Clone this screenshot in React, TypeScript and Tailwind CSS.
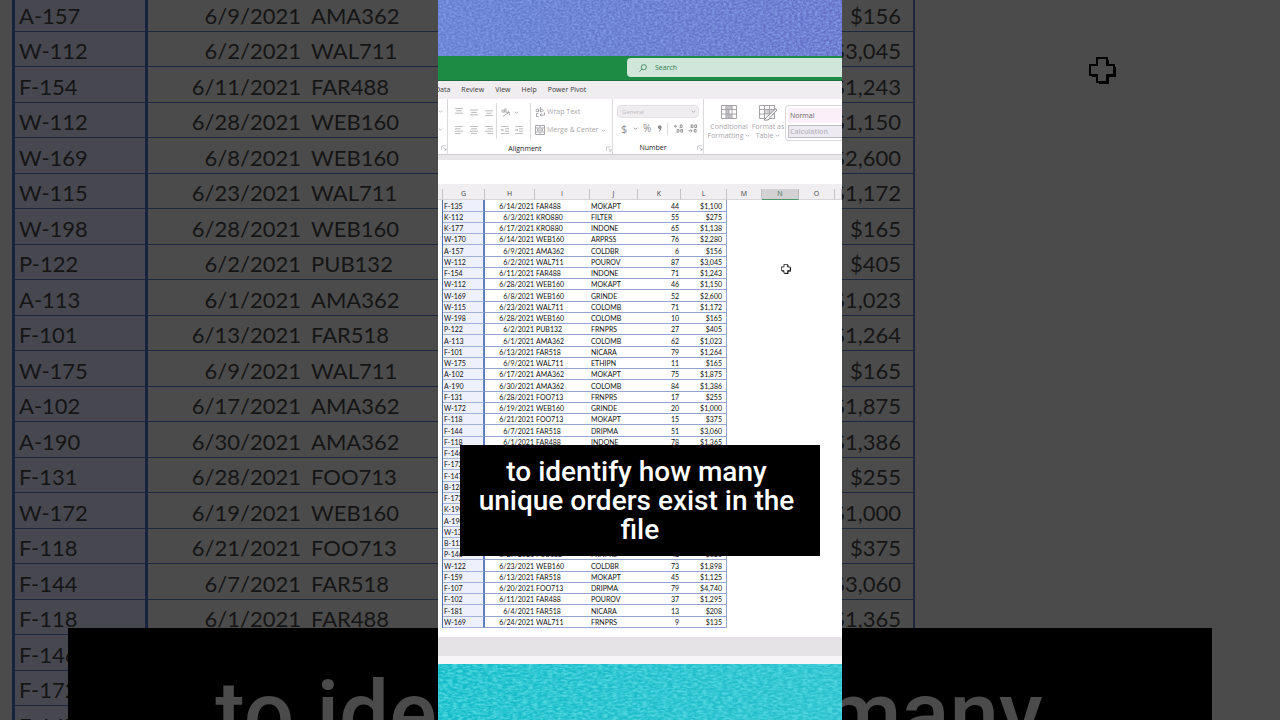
import type { ReactNode } from 'react'

type Order = [string, string, string, string, string, string]

const orders: Order[] = [
  ['F-135', '6/14/2021', 'FAR488', 'MOKAPT', '44', '$1,100'],
  ['K-112', '6/3/2021', 'KRO880', 'FILTER', '55', '$275'],
  ['K-177', '6/17/2021', 'KRO880', 'INDONE', '65', '$1,138'],
  ['W-170', '6/14/2021', 'WEB160', 'ARPRSS', '76', '$2,280'],
  ['A-157', '6/9/2021', 'AMA362', 'COLDBR', '6', '$156'],
  ['W-112', '6/2/2021', 'WAL711', 'POUROV', '87', '$3,045'],
  ['F-154', '6/11/2021', 'FAR488', 'INDONE', '71', '$1,243'],
  ['W-112', '6/28/2021', 'WEB160', 'MOKAPT', '46', '$1,150'],
  ['W-169', '6/8/2021', 'WEB160', 'GRINDE', '52', '$2,600'],
  ['W-115', '6/23/2021', 'WAL711', 'COLOMB', '71', '$1,172'],
  ['W-198', '6/28/2021', 'WEB160', 'COLOMB', '10', '$165'],
  ['P-122', '6/2/2021', 'PUB132', 'FRNPRS', '27', '$405'],
  ['A-113', '6/1/2021', 'AMA362', 'COLOMB', '62', '$1,023'],
  ['F-101', '6/13/2021', 'FAR518', 'NICARA', '79', '$1,264'],
  ['W-175', '6/9/2021', 'WAL711', 'ETHIPN', '11', '$165'],
  ['A-102', '6/17/2021', 'AMA362', 'MOKAPT', '75', '$1,875'],
  ['A-190', '6/30/2021', 'AMA362', 'COLOMB', '84', '$1,386'],
  ['F-131', '6/28/2021', 'FOO713', 'FRNPRS', '17', '$255'],
  ['W-172', '6/19/2021', 'WEB160', 'GRINDE', '20', '$1,000'],
  ['F-118', '6/21/2021', 'FOO713', 'MOKAPT', '15', '$375'],
  ['F-144', '6/7/2021', 'FAR518', 'DRIPMA', '51', '$3,060'],
  ['F-118', '6/1/2021', 'FAR488', 'INDONE', '78', '$1,365'],
  ['F-146', '', '', '', '', ''],
  ['F-172', '', '', '', '', ''],
  ['F-147', '', '', '', '', ''],
  ['B-128', '', '', '', '', ''],
  ['F-172', '', '', '', '', ''],
  ['K-190', '', '', '', '', ''],
  ['A-190', '', '', '', '', ''],
  ['W-136', '', '', '', '', ''],
  ['B-112', '', '', '', '', ''],
  ['P-146', '6/27/2021', 'PUB132', 'FRNPRS', '42', '$630'],
  ['W-122', '6/23/2021', 'WEB160', 'COLDBR', '73', '$1,898'],
  ['F-159', '6/13/2021', 'FAR518', 'MOKAPT', '45', '$1,125'],
  ['F-107', '6/20/2021', 'FOO713', 'DRIPMA', '79', '$4,740'],
  ['F-102', '6/11/2021', 'FAR488', 'POUROV', '37', '$1,295'],
  ['F-181', '6/4/2021', 'FAR518', 'NICARA', '13', '$208'],
  ['W-169', '6/24/2021', 'WAL711', 'FRNPRS', '9', '$135'],
]

const caption = 'to identify how many \nunique orders exist in the \nfile'

function CellCursor({ className, fill }: { className: string; fill: string }) {
  return (
    <svg viewBox="0 0 27 27" className={className} aria-hidden="true">
      <path d="M10 3h10v7h7v10h-7v7H10v-7H3V10h7z" fill="#000" />
      <path d="M8 1h10v7h7v10h-7v7H8v-7H1V8h7z" fill={fill} stroke="#000" strokeWidth="2" />
    </svg>
  )
}

function Fabric({ id, frequency, from, to, thread }: { id: string; frequency: string; from: string; to: string; thread: string }) {
  return (
    <svg className="block h-14 w-full shrink-0" aria-hidden="true">
      <linearGradient id={`${id}-base`}>
        <stop offset="0" stopColor={from} />
        <stop offset="1" stopColor={to} />
      </linearGradient>
      <filter id={id} x="0" y="0" width="100%" height="100%">
        <feTurbulence type="fractalNoise" baseFrequency={frequency} numOctaves="3" seed="4" />
        <feColorMatrix values="0 0 0 0 1  0 0 0 0 1  0 0 0 0 1  2.4 0 0 0 -0.8" />
        <feComposite in="SourceGraphic" operator="in" />
      </filter>
      <rect width="100%" height="100%" fill={`url(#${id}-base)`} />
      <rect width="100%" height="100%" fill={thread} filter={`url(#${id})`} />
    </svg>
  )
}

function Chevron() {
  return (
    <svg viewBox="0 0 6 6" className="size-[5px] shrink-0" fill="none" stroke="currentColor" aria-hidden="true">
      <path d="M1 2l2 2 2-2" />
    </svg>
  )
}

function Icon({ d, className = 'size-2' }: { d: string; className?: string }) {
  return (
    <svg viewBox="0 0 10 10" className={`shrink-0 ${className}`} fill="none" stroke="currentColor" aria-hidden="true">
      <path d={d} />
    </svg>
  )
}

function Tool({ label, children }: { label: string; children: ReactNode }) {
  return (
    <button type="button" aria-label={label} className="flex shrink-0 items-center">
      {children}
    </button>
  )
}

function Launcher() {
  return (
    <button type="button" aria-label="More settings" className="text-[#aaa8ac]">
      <Icon d="M1 8V1.5h7M4 4l4.500 4.500M8.500 5v3.500H5" className="size-[6px]" />
    </button>
  )
}

function Ribbon() {
  return (
    <div className="flex h-14 overflow-hidden border-b border-[#d0ced1] bg-white text-[#a9a7ab]">
      <div className="flex w-[10px] shrink-0 flex-col border-r border-[#dcdadd] pt-1">
        <div className="flex h-[18px] items-center"><Chevron /></div>
        <div className="flex h-[18px] items-center"><Chevron /></div>
        <div className="mt-1 flex h-3 items-center justify-end"><Launcher /></div>
      </div>

      <div className="flex w-[165px] shrink-0 flex-col border-r border-[#dcdadd] pt-1">
        <div className="flex">
          <div className="w-[49px] border-r border-[#dcdadd] pl-[7px]">
            <div className="flex h-[18px] items-center gap-[7px]">
              <Tool label="Top align"><Icon d="M0 .5h10M1.5 3.500h7M0 6.500h10" /></Tool>
              <Tool label="Middle align"><Icon d="M0 2.500h10M1.5 5.500h7M0 8.500h10" /></Tool>
              <Tool label="Bottom align"><Icon d="M0 3.500h10M1.5 6.500h7M0 9.500h10" /></Tool>
            </div>
            <div className="flex h-[18px] items-center gap-[7px]">
              <Tool label="Align left"><Icon d="M0 .5h10M0 3.500h7M0 6.500h10M0 9.500h7" /></Tool>
              <Tool label="Center"><Icon d="M0 .5h10M1.5 3.500h7M0 6.500h10M1.5 9.500h7" /></Tool>
              <Tool label="Align right"><Icon d="M0 .5h10M3 3.500h7M0 6.500h10M3 9.500h7" /></Tool>
            </div>
          </div>
          <div className="w-[34px] border-r border-[#dcdadd] pl-1">
            <div className="flex h-[18px] items-center gap-1">
              <Tool label="Orientation"><Icon d="M1 3.500a1.300 1.300 0 1 0 2.600 0a1.300 1.300 0 1 0-2.600 0M4 1v4M5.500 0v5M5.500 4a1.300 1.300 0 1 0 2.600-1M2 9.500L9 5M9.500 8V5H6.500" className="size-[9px]" /></Tool>
              <Chevron />
            </div>
            <div className="flex h-[18px] items-center gap-[6px]">
              <Tool label="Decrease indent"><Icon d="M0 .5h10M5 3.500h5M5 6.500h5M0 9.500h10M4 5H.5M2 3.500L.5 5L2 6.500" /></Tool>
              <Tool label="Increase indent"><Icon d="M0 .5h10M5 3.500h5M5 6.500h5M0 9.500h10M0 5h3.500M2 3.500L3.500 5L2 6.500" /></Tool>
            </div>
          </div>
          <div className="flex-1 pl-1 text-[7px]">
            <div className="flex h-[18px] items-center">
              <button type="button" className="flex items-center gap-[2px] whitespace-nowrap">
                <Icon d="M1 3.500a1.300 1.300 0 1 0 2.600 0a1.300 1.300 0 1 0-2.600 0M3.600 2v3M5.500 0v5M5.500 3.500a1.300 1.300 0 1 0 2.600 0a1.300 1.300 0 1 0-2.600 0M3.500 6.500H1.5v3h2M5 8h4.500V5.500M6.500 6.500L5 8l1.500 1.500" className="size-[10px]" />
                Wrap Text
              </button>
            </div>
            <div className="flex h-[18px] items-center justify-between pr-[6px]">
              <button type="button" className="flex items-center gap-[2px] whitespace-nowrap">
                <Icon d="M.5.5h9v9h-9zM.5 3h9M.5 7h9M5 .5V3M5 7v2.500M2 5h6M3.500 4L2 5l1.500 1M6.500 4L8 5L6.500 6" className="size-[10px]" />
                Merge &amp; Center
              </button>
              <Chevron />
            </div>
          </div>
        </div>
        <div className="mt-[5px] flex h-3 items-center">
          <span className="flex-1 pr-1 text-center text-[7px] text-[#222]">Alignment</span>
          <Launcher />
        </div>
      </div>

      <div className="flex w-[91px] shrink-0 flex-col border-r border-[#dcdadd] pt-1">
        <div className="flex h-[18px] items-center px-1">
          <div className="flex h-[13px] w-full items-center rounded-sm border border-[#e4e2e5] bg-[#efedf0] pr-[2px]">
            <select aria-label="Number format" className="flex-1 appearance-none pl-1 text-[6px] leading-[10px] text-[#bebcc0] outline-none">
              <option>General</option>
            </select>
            <Chevron />
          </div>
        </div>
        <div className="flex h-[18px] items-center justify-between pr-[6px] pl-2 text-[#8b898d]">
          <button type="button" aria-label="Currency" className="text-[11px]">$</button>
          <Chevron />
          <button type="button" aria-label="Percent" className="text-[10px]">%</button>
          <button type="button" aria-label="Comma style">
            <svg viewBox="0 0 6 10" className="h-[9px] w-[5px]" fill="currentColor" aria-hidden="true">
              <path d="M3 1a2.200 2.200 0 1 0 .5 4.500C3 7.500 2 8.500 1 9c3-.5 4.500-3 4.500-5.500C5.500 2 4.500 1 3 1z" />
            </svg>
          </button>
          <span className="h-3 w-px bg-[#dcdadd]" />
          <Tool label="Increase decimal"><Icon d="M3.500 2.500H.5M2 1L.5 2.500L2 4M5.500 4v.5M7 1h2v3H7zM2 9v.5M3.500 6h2v3h-2zM7.500 6h2v3h-2z" className="size-[9px]" /></Tool>
          <Tool label="Decrease decimal"><Icon d="M2 4v.5M3.500 1h2v3h-2zM7.500 1h2v3h-2zM.5 7.500h4M3 6l1.500 1.500L3 9M7 6h2v3H7z" className="size-[9px]" /></Tool>
        </div>
        <div className="mt-[5px] flex h-3 items-center">
          <span className="flex-1 pr-1 text-center text-[7px] text-[#222]">Number</span>
          <Launcher />
        </div>
      </div>

      <div className="flex min-w-0 flex-1 pt-[6px] text-[7px] leading-[9px]">
        <button type="button" className="flex w-[50px] shrink-0 flex-col items-center">
          <svg viewBox="0 0 16 14" className="mb-[3px] h-[14px] w-4" aria-hidden="true">
            <path d="M5 .5h6v4H8V9h3v4H5z" fill="#c5c3c7" />
            <path d="M.5.5h15v13H.5zM.5 4.500h15M.5 9h15M5 .5v13M11 .5v13M8 4.500v9" fill="none" stroke="#a5a3a7" />
          </svg>
          Conditional
          <span className="flex items-center gap-[2px]">Formatting <Chevron /></span>
        </button>
        <button type="button" className="flex w-7 shrink-0 flex-col items-center whitespace-nowrap">
          <svg viewBox="0 0 18 16" className="mb-px h-4 w-[18px]" aria-hidden="true">
            <path d="M5 4.500h11V9H5z" fill="#d3d1d5" />
            <path d="M.5.5h15v13H.5zM.5 4.500h15M.5 9h15M5.500.5v13M10.500.5v13" fill="none" stroke="#a5a3a7" />
            <path d="M17 3.500L9 11c-2 .5-2 3-4 4c3 .5 5.500 0 6-2.500L18 5z" fill="#fff" stroke="#929094" />
          </svg>
          Format as
          <span className="flex items-center gap-[2px]">Table <Chevron /></span>
        </button>
        <div className="ml-[3px] flex h-9 min-w-0 flex-1 flex-col gap-[2px] rounded-l-sm border border-r-0 border-[#d8d6d9] py-[2px] pl-[2px]">
          <button type="button" className="h-[15px] shrink-0 bg-[#fbf0fa] pb-px pl-[2px] text-left text-[7px] text-[#666]">Normal</button>
          <button type="button" className="h-[13px] shrink-0 border border-r-0 border-[#bdbbc0] bg-[#eeeaf2] pb-px pl-px text-left font-semibold text-[#b9b7bd]">Calculation</button>
        </div>
      </div>
    </div>
  )
}

function Sheet() {
  return (
    <table className="w-full table-fixed border-separate border-spacing-0 font-['Lato',sans-serif] text-[7px] leading-[10px] text-[#111]">
      <colgroup>
        <col className="w-[5px]" />
        <col className="w-[42px]" />
        <col className="w-[50px]" />
        <col className="w-[55px]" />
        <col className="w-[48px]" />
        <col className="w-[43px]" />
        <col className="w-[46px]" />
        <col className="w-[35px]" />
        <col className="w-[37px]" />
        <col className="w-[36px]" />
        <col />
      </colgroup>
      <thead className="bg-[#f0eef1] font-['Open_Sans',sans-serif] text-[#444]">
        <tr className="h-[11px]">
          {['', 'G', 'H', 'I', 'J', 'K', 'L', 'M', 'N', 'O', ''].map((name, i) => (
            <th
              key={i}
              className={
                name === 'N'
                  ? 'border-r border-b border-r-[#b8b6b9] border-b-[#4c9a6c] bg-[#d3d1d3] p-0 font-normal text-[#3c7a55]'
                  : 'border-r border-b border-r-[#c4c2c6] border-b-[#d8d6d9] p-0 font-normal'
              }
            >
              {name}
            </th>
          ))}
        </tr>
      </thead>
      <tbody>
        {orders.map(([id, date, customer, product, qty, total], i) => (
          <tr key={i} className="h-[11px] nth-[4n+1]:h-3">
            <td className="border-r border-[#4f74b8] p-0" />
            <td className="border-r-2 border-b border-r-[#5f80bd] border-b-[#a3b1d9] bg-[#eef0fc] p-0 pl-px">{id}</td>
            <td className="border-b border-[#94a4d0] p-0 pr-px text-right">{date}</td>
            <td className="border-b border-[#94a4d0] p-0 pl-px">{customer}</td>
            <td className="border-b border-[#94a4d0] p-0 pl-px">{product}</td>
            <td className="border-b border-[#94a4d0] p-0 pr-[2px] text-right">{qty}</td>
            <td className="border-r border-b border-[#94a4d0] p-0 pr-1 text-right">{total}</td>
            <td colSpan={4} className="p-0" />
          </tr>
        ))}
      </tbody>
    </table>
  )
}

// dimmed close-up of the same sheet that fills the space beside the clip
function Backdrop() {
  return (
    <div aria-hidden="true" className="absolute inset-0 overflow-hidden bg-[#4b4b4b]">
      <table className="-mt-1 ml-3 table-fixed border-separate border-spacing-0 font-['Lato',sans-serif] text-[22px] leading-[30px] text-[#151515]">
        <colgroup>
          <col className="w-[136px]" />
          <col className="w-[159px]" />
          <col className="w-[174px]" />
          <col className="w-[290px]" />
          <col className="w-[144px]" />
        </colgroup>
        <tbody>
          {orders.slice(4, 25).map(([id, date, customer, , , total], i) => (
            <tr key={i} className="h-[35px] odd:h-[36px]">
              <td className="border-x-3 border-b border-x-[#16233f] border-b-[#1d2740] bg-[#47484f] p-0 pt-1 pl-1">{id}</td>
              <td className="border-b border-[#1d2740] p-0 pt-1 pr-[6px] text-right">{date}</td>
              <td className="border-b border-[#1d2740] p-0 pt-1 pl-1">{customer}</td>
              <td className="border-b border-[#1d2740] p-0" />
              <td className="border-r-2 border-b border-[#1d2740] p-0 pt-1 pr-3 text-right">{total}</td>
            </tr>
          ))}
        </tbody>
      </table>
      <CellCursor className="absolute top-[57px] left-[1089px] size-[27px]" fill="#4b4b4b" />
      <p className="absolute inset-x-[68px] top-[628px] h-[354px] bg-black pt-10 text-center font-['Roboto',sans-serif] text-[89px] leading-[92px] font-medium whitespace-pre text-[#4b4b4b]">
        {caption}
      </p>
    </div>
  )
}

export default function App() {
  return (
    <main className="relative flex min-h-screen justify-center overflow-hidden font-['Open_Sans',sans-serif]">
      <Backdrop />

      <section className="relative flex max-h-screen w-full max-w-[404px] flex-col overflow-hidden bg-white">
        <Fabric id="denim" frequency="0.35 0.5" from="#6480d0" to="#6670c8" thread="#7f97e4" />

        <header className="flex h-[25px] items-start border-b border-[#1b6e3c] bg-[#1c8c44] pt-[2px]">
          <label className="ml-auto flex h-[19px] w-[215px] items-center gap-2 rounded-l-sm bg-[#d1e6da] pt-px pl-3 text-[#2d7a50]">
            <svg viewBox="0 0 10 10" className="size-2" fill="none" stroke="currentColor" aria-hidden="true">
              <circle cx="6" cy="4" r="3.2" />
              <path d="M3.700 6.300L.5 9.500" />
            </svg>
            <input type="text" placeholder="Search" aria-label="Search" className="min-w-0 flex-1 text-[7px] outline-none placeholder:text-[#2d7a50]" />
          </label>
        </header>

        <nav className="flex h-[18px] items-center gap-[11px] bg-[#f0edf0] pt-px text-[7px] whitespace-nowrap text-[#3a3a3a]">
          <a href="#data" className="-ml-[3px]">Data</a>
          <a href="#review">Review</a>
          <a href="#view">View</a>
          <a href="#help">Help</a>
          <a href="#power-pivot">Power Pivot</a>
        </nav>

        <Ribbon />

        <div className="border-t-5 border-b-5 border-t-[#e9e6e9] border-b-[#f0eef1]">
          <input type="text" aria-label="Formula" className="block h-6 w-full outline-none" />
        </div>

        <Sheet />

        <div className="mt-[9px] h-[19px] shrink-0 bg-[#e6e3e6]" />
        <div className="h-2 shrink-0 bg-[#f7f5f7]" />
        <Fabric id="canvas" frequency="0.2 0.45" from="#14bcc8" to="#2cc0cc" thread="#4fd6e0" />

        <CellCursor className="absolute top-[264px] left-[343px] size-[10px]" fill="#fff" />
        <p className="absolute inset-x-[22px] top-[445px] bg-black pt-3 pb-3 text-center font-['Roboto',sans-serif] text-[28px] leading-[29px] font-medium whitespace-pre text-white">
          {caption}
        </p>
      </section>
    </main>
  )
}
